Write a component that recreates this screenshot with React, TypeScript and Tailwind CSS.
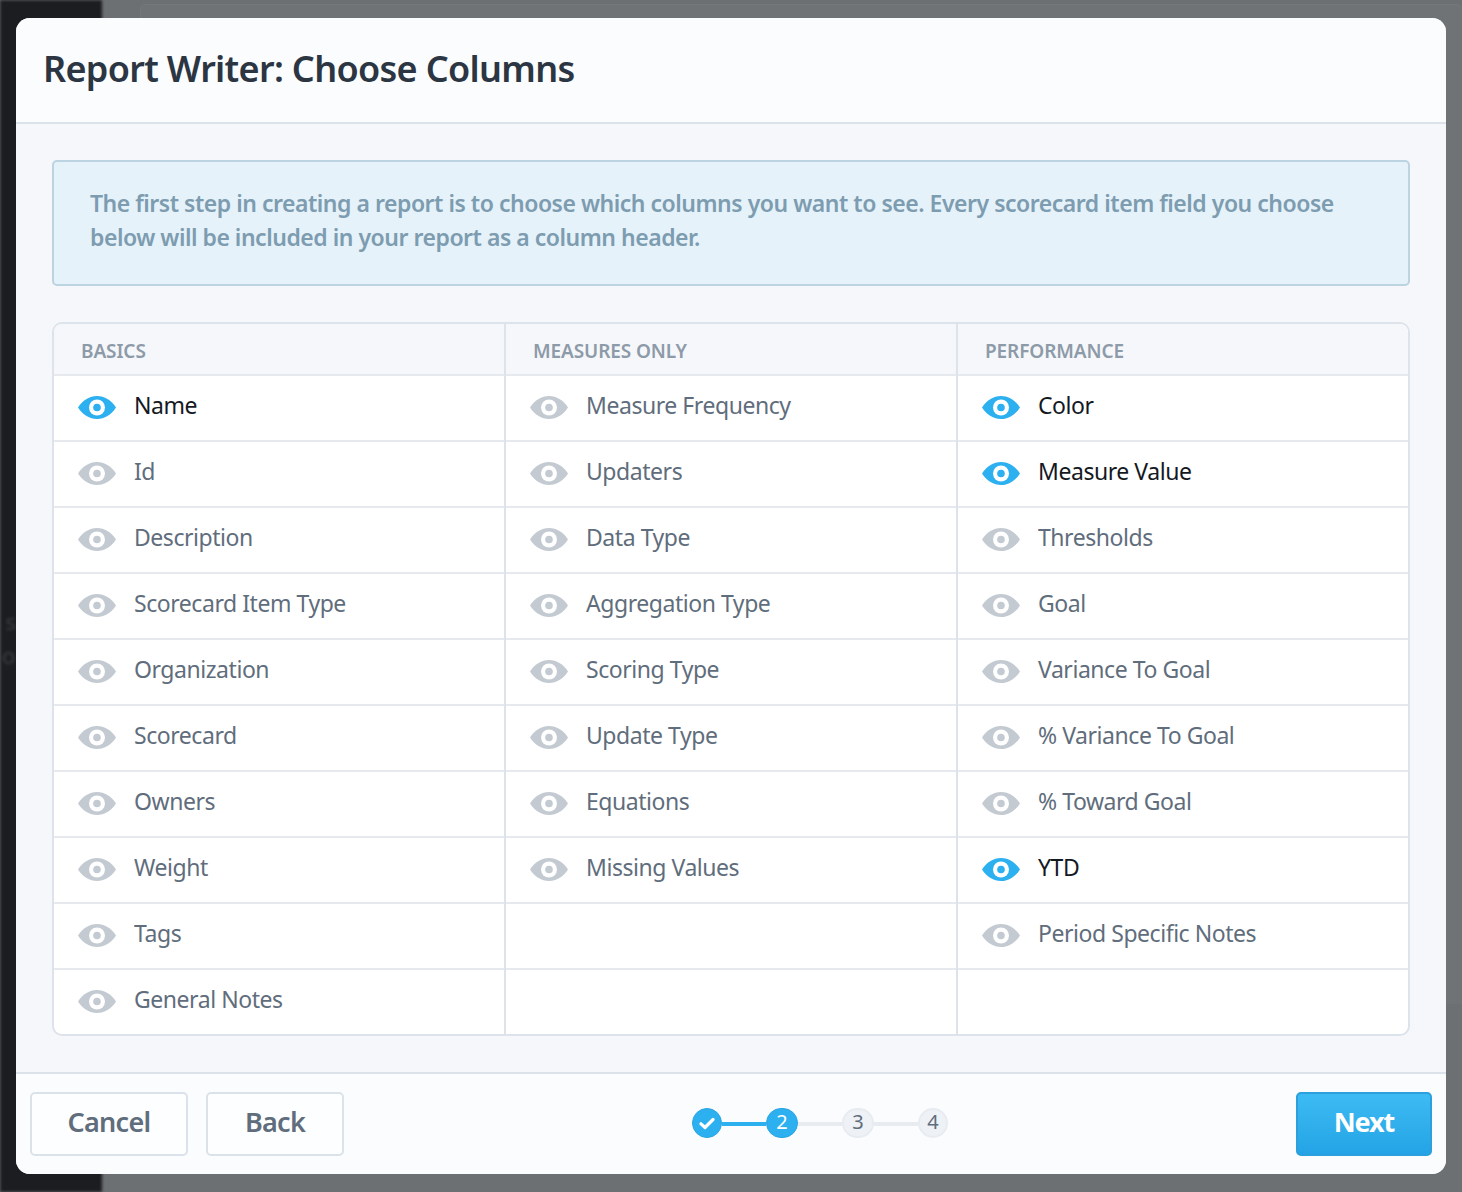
type Item = { label: string; on?: boolean };

const columns: { title: string; items: Item[] }[] = [
  {
    title: "BASICS",
    items: [
      { label: "Name", on: true },
      { label: "Id" },
      { label: "Description" },
      { label: "Scorecard Item Type" },
      { label: "Organization" },
      { label: "Scorecard" },
      { label: "Owners" },
      { label: "Weight" },
      { label: "Tags" },
      { label: "General Notes" },
    ],
  },
  {
    title: "MEASURES ONLY",
    items: [
      { label: "Measure Frequency" },
      { label: "Updaters" },
      { label: "Data Type" },
      { label: "Aggregation Type" },
      { label: "Scoring Type" },
      { label: "Update Type" },
      { label: "Equations" },
      { label: "Missing Values" },
    ],
  },
  {
    title: "PERFORMANCE",
    items: [
      { label: "Color", on: true },
      { label: "Measure Value", on: true },
      { label: "Thresholds" },
      { label: "Goal" },
      { label: "Variance To Goal" },
      { label: "% Variance To Goal" },
      { label: "% Toward Goal" },
      { label: "YTD", on: true },
      { label: "Period Specific Notes" },
    ],
  },
];

function Eye({ on }: { on?: boolean }) {
  const color = on ? "#2cb0f0" : "#c3cad1";
  return (
    <svg width="38" height="23" viewBox="0 0 38 23" className="shrink-0">
      <path d="M0 11.5C5 4 11.5 0 19 0s14 4 19 11.5C33 19 26.5 23 19 23S5 19 0 11.5Z" fill={color} />
      <circle cx="19" cy="11.5" r="8" fill="#fff" />
      <circle cx="19" cy="11.5" r="3.8" fill={color} />
    </svg>
  );
}

function Column({ title, items, last }: { title: string; items: Item[]; last?: boolean }) {
  const rows = Array.from({ length: 10 }, (_, i) => items[i]);
  return (
    <div className={`flex-1 min-w-0 ${last ? "" : "border-r-2 border-[#dde3ea]"}`}>
      <div className="h-[52px] pl-[27px] pt-[15px] bg-[#f5f7fb] border-b-2 border-[#e6eaef] text-[19px] leading-[24px] font-semibold text-[#8d9aa8] tracking-[-0.1px]">
        {title}
      </div>
      {rows.map((item, i) => (
        <div
          key={i}
          className={`h-[66px] flex items-center pl-[24px] pb-[1px] gap-[18px] text-[23px] tracking-[-0.45px] border-b-2 ${
            i < 9 ? "border-[#e6eaef]" : "border-transparent"
          } ${item?.on ? "text-[#14191f]" : "text-[#5f6d7c]"}`}
        >
          {item && <Eye on={item.on} />}
          {item && <span className="-mt-[4px]">{item.label}</span>}
        </div>
      ))}
    </div>
  );
}

function Step({ n, state, wide }: { n: number; state: "done" | "active" | "todo"; wide?: boolean }) {
  const width = wide ? "w-[32px]" : "w-[30px]";
  if (state === "todo") {
    return (
      <div className={`${width} h-[30px] rounded-full bg-[#eef1f5] border-2 border-[#e8ecf1] flex items-center justify-center text-[20px] leading-none pb-[3px] text-[#5f6d7c]`}>
        {n}
      </div>
    );
  }
  return (
    <div className={`${width} h-[30px] rounded-full bg-[#2cb0f0] border border-[#2ba5e2] flex items-center justify-center text-[20px] leading-none text-white ${state === "done" ? "" : "pb-[3px]"}`}>
      {state === "done" ? (
        <svg width="16" height="13" viewBox="0 0 16 13">
          <path d="M2 6.8 6 10.5 14 2.5" fill="none" stroke="#fff" strokeWidth="3.2" strokeLinecap="round" strokeLinejoin="round" />
        </svg>
      ) : (
        n
      )}
    </div>
  );
}

export default function App() {
  return (
    <div className="relative w-[1462px] h-[1192px] overflow-hidden flex bg-[#6d7073] font-['Noto_Sans',sans-serif]">
      <div className="w-[102px] shrink-0 bg-[#1c1d20] text-[#3a3e42] text-[22px] leading-[34px] pt-[604px] blur-[1.5px]">
        <div className="text-right pr-[86px]">s</div>
        <div className="pl-[2px]">o</div>
      </div>
      <div className="flex-1 pt-[4px] pl-[38px]">
        <div className="h-[1000px] rounded-t-md border-l border-t border-[#74787b] bg-[#6f7376]" />
      </div>

      <div className="absolute left-[16px] top-[18px] w-[1430px] h-[1156px] rounded-[14px] overflow-hidden bg-[#f5f7fb] flex flex-col">
        <div className="h-[106px] shrink-0 bg-[#fbfcfe] border-b-2 border-[#dbe2ea] pl-[27px] pt-[23px] text-[36px] leading-[56px] font-semibold text-[#2c3643] tracking-[-0.67px]">
          Report Writer: Choose Columns
        </div>

        <div className="flex-1 px-[36px] pt-[36px]">
          <div className="h-[126px] rounded-[5px] border-2 border-[#bcd3e2] bg-[#e5f2fa] pl-[36px] pt-[24px] text-[23px] leading-[34px] font-semibold text-[#7d9cb0] tracking-[-0.48px]">
            The first step in creating a report is to choose which columns you want to see. Every scorecard item field you choose
            <br />
            below will be included in your report as a column header.
          </div>

          <div className="mt-[36px] h-[714px] rounded-[10px] border-2 border-[#dde3ea] bg-white overflow-hidden flex">
            {columns.map((c, i) => (
              <Column key={c.title} title={c.title} items={c.items} last={i === 2} />
            ))}
          </div>
        </div>

        <div className="h-[102px] shrink-0 bg-[#fbfcfe] border-t-2 border-[#dbe2ea] flex items-start justify-between px-[14px] pt-[18px]">
          <div className="flex gap-[18px]">
            <button className="w-[158px] h-[64px] pb-[3px] rounded-[5px] border-2 border-[#dbe2ea] bg-[#fdfeff] text-[27px] font-semibold text-[#5f6d7c] tracking-[-0.7px]">
              Cancel
            </button>
            <button className="w-[138px] h-[64px] pb-[3px] rounded-[5px] border-2 border-[#dbe2ea] bg-[#fdfeff] text-[27px] font-semibold text-[#5f6d7c] tracking-[-0.7px]">
              Back
            </button>
          </div>

          <div className="flex items-center -mt-[1px] h-[64px]">
            <Step n={1} state="done" />
            <div className="w-[44px] h-[4px] mt-[2px] bg-[#2cb0f0]" />
            <Step n={2} state="active" wide />
            <div className="w-[44px] h-[4px] mt-[2px] bg-[#e8ecf1]" />
            <Step n={3} state="todo" wide />
            <div className="w-[44px] h-[4px] mt-[2px] bg-[#e8ecf1]" />
            <Step n={4} state="todo" />
          </div>

          <button className="w-[136px] h-[64px] pb-[3px] rounded-[5px] border-2 border-[#2ba0dc] bg-gradient-to-b from-[#3dbbf3] to-[#24a4e6] text-[27px] font-bold text-white tracking-[-1.1px]">
            Next
          </button>
        </div>
      </div>
    </div>
  );
}
